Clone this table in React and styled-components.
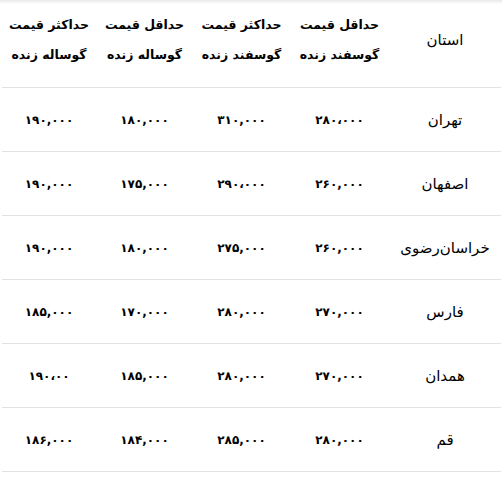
import React from "react";
import styled, { createGlobalStyle } from "styled-components";

const Global = createGlobalStyle`
  html, body { margin: 0; padding: 0; background: #fff; }
  body { font-family: "DejaVu Sans", "Noto Sans", sans-serif; color: #000; }
`;

const Wrap = styled.div`
  width: 503px;
  height: 489px;
  box-sizing: border-box;
  padding: 0 2px;
  background: linear-gradient(#e9e9e9, #ffffff 4px) no-repeat;
  background-size: 502px 4px;
  background-color: #fff;
`;

const Table = styled.table`
  direction: rtl;
  width: 100%;
  border-collapse: collapse;
  table-layout: fixed;
`;

const Head = styled.th`
  height: 60px;
  padding: 10px 0 17px;
  font-size: ${(p) => (p.$name ? "15px" : "12.5px")};
  font-weight: ${(p) => (p.$name ? "normal" : "bold")};
  line-height: 30px;
  text-align: center;
  vertical-align: middle;
  white-space: nowrap;
  border-bottom: 1px solid #e2e2e2;
`;

const Cell = styled.td`
  height: 63px;
  padding: 0 2px;
  text-align: center;
  vertical-align: middle;
  white-space: nowrap;
  border-bottom: 1px solid #e2e2e2;
  font-size: ${(p) => (p.$name ? "15px" : "12px")};
  font-weight: ${(p) => (p.$name ? "normal" : "bold")};
`;

const headers = [
  ["حداقل قیمت", "گوسفند زنده"],
  ["حداکثر قیمت", "گوسفند زنده"],
  ["حداقل قیمت", "گوساله زنده"],
  ["حداکثر قیمت", "گوساله زنده"],
];

const rows = [
  ["تهران", "۲۸۰،۰۰۰", "۳۱۰,۰۰۰", "۱۸۰,۰۰۰", "۱۹۰,۰۰۰"],
  ["اصفهان", "۲۶۰,۰۰۰", "۲۹۰،۰۰۰", "۱۷۵,۰۰۰", "۱۹۰,۰۰۰"],
  ["خراسان‌رضوی", "۲۶۰,۰۰۰", "۲۷۵,۰۰۰", "۱۸۰,۰۰۰", "۱۹۰,۰۰۰"],
  ["فارس", "۲۷۰,۰۰۰", "۲۸۰,۰۰۰", "۱۷۰,۰۰۰", "۱۸۵,۰۰۰"],
  ["همدان", "۲۷۰,۰۰۰", "۲۸۰,۰۰۰", "۱۸۵,۰۰۰", "۱۹۰،۰۰"],
  ["قم", "۲۸۰,۰۰۰", "۲۸۵,۰۰۰", "۱۸۴,۰۰۰", "۱۸۶,۰۰۰"],
];

const widths = [112, 99, 97, 97, 94];

export default function App() {
  return (
    <Wrap>
      <Global />
      <Table>
        <colgroup>
          {widths.map((w, i) => (
            <col key={i} style={{ width: w }} />
          ))}
        </colgroup>
        <thead>
          <tr>
            <Head $name>استان</Head>
            {headers.map((h, i) => (
              <Head key={i}>
                {h[0]}
                <br />
                {h[1]}
              </Head>
            ))}
          </tr>
        </thead>
        <tbody>
          {rows.map((r, i) => (
            <tr key={i}>
              {r.map((c, j) => (
                <Cell key={j} $name={j === 0}>
                  {c}
                </Cell>
              ))}
            </tr>
          ))}
        </tbody>
      </Table>
    </Wrap>
  );
}
